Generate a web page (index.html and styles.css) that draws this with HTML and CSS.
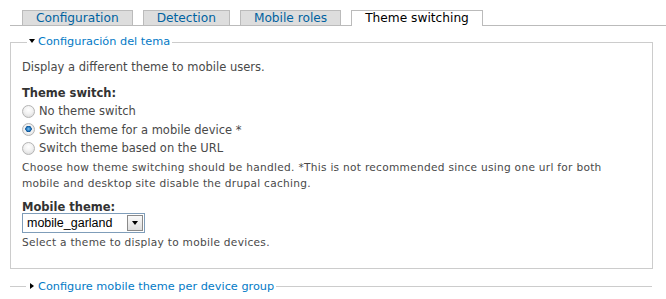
FILE: index.html
```html
<!DOCTYPE html>
<html lang="en">
<head>
  <meta charset="UTF-8">
  <title>Theme switching</title>
  <link rel="stylesheet" href="styles.css">
</head>
<body>

  <ul class="tabs">
    <li><a href="#">Configuration</a></li>
    <li><a href="#">Detection</a></li>
    <li><a href="#">Mobile roles</a></li>
    <li class="active"><a href="#">Theme switching</a></li>
  </ul>

  <form class="settings">
    <fieldset class="group">
      <legend><a href="#"><span class="arrow down"></span>Configuración del tema</a></legend>

      <p class="intro">Display a different theme to mobile users.</p>

      <div class="form-item">
        <label class="title">Theme switch:</label>
        <label class="option"><input type="radio" name="switch" value="none"> No theme switch</label>
        <label class="option"><input type="radio" name="switch" value="device" checked> Switch theme for a mobile device *</label>
        <label class="option"><input type="radio" name="switch" value="url"> Switch theme based on the URL</label>
        <div class="description wrap">Choose how theme switching should be handled. *This is not recommended since using one url for both mobile and desktop site disable the drupal caching.</div>
      </div>

      <div class="form-item">
        <label class="title" for="mobileTheme">Mobile theme:</label>
        <div class="select">
          <select id="mobileTheme">
            <option>mobile_garland</option>
          </select>
          <span class="select-btn"><span class="arrow down"></span></span>
        </div>
        <div class="description">Select a theme to display to mobile devices.</div>
      </div>
    </fieldset>

    <fieldset class="group collapsed">
      <legend><a href="#"><span class="arrow right"></span>Configure mobile theme per device group</a></legend>
    </fieldset>
  </form>

</body>
</html>
```

FILE: styles.css
```css
body {
  font-family: 'DejaVu Sans', Verdana, sans-serif;
  font-size: 11.5px;
  color: #494949;
  background-color: #fff;
  margin: 0;
  padding: 10px 13px 0 10px;
}
a {
  color: #027ac6;
  text-decoration: none;
}
.tabs {
  list-style: none;
  margin: 0 -13px 0 0;
  padding: 0 0 0 12px;
  display: flex;
  gap: 10px;
  border-bottom: 1px solid #bbb;
  height: 15px;
}
.tabs li {
  height: 15px;
  background-color: #ddd;
  border: 1px solid #bbb;
  border-bottom: none;
  box-sizing: border-box;
}
.tabs a {
  display: block;
  padding: 0 13px;
  font-size: 12.2px;
  line-height: 14px;
  color: #0062a0;
}
.tabs li.active {
  background-color: #fff;
  height: 16px;
}
.tabs li.active a {
  color: #000;
}
.settings {
  margin-top: 9px;
}
.group {
  margin: 0;
  padding: 9px 11px 18px;
  border: 1px solid #ccc;
}
.group legend {
  padding: 0 2px;
  margin-left: 5px;
  font-size: 11.3px;
  line-height: 14px;
}
.arrow {
  display: inline-block;
  width: 0;
  height: 0;
  margin-right: 3px;
  vertical-align: 2px;
}
.arrow.down {
  border-left: 3px solid transparent;
  border-right: 3px solid transparent;
  border-top: 4px solid #000;
}
.arrow.right {
  border-top: 3px solid transparent;
  border-bottom: 3px solid transparent;
  border-left: 4px solid #000;
  margin-left: 2px;
  margin-right: 4px;
  vertical-align: 1px;
}
.intro {
  margin: 0 0 8px;
  line-height: 18px;
}
.form-item {
  margin-bottom: 7px;
}
.form-item:last-child {
  margin-bottom: 0;
}
.title {
  display: block;
  font-weight: bold;
  color: #333;
  line-height: 18px;
}
.option {
  display: flex;
  align-items: center;
  gap: 4px;
  line-height: 18.5px;
}
input[type="radio"] {
  appearance: none;
  width: 13px;
  height: 13px;
  margin: 0;
  border: 1px solid #b4b4b4;
  border-radius: 50%;
  background: radial-gradient(circle at 50% 35%, #fff 0%, #f2f2f2 45%, #d4d4d4 100%);
  box-sizing: border-box;
}
input[type="radio"]:checked {
  background: radial-gradient(circle at 50% 45%, #7fc4f2 0%, #1b6fb8 28%, #0a4a88 36%, #f4f4f4 42%, #dcdcdc 100%);
}
.description {
  font-size: 10.6px;
  line-height: 16px;
  letter-spacing: 0.28px;
  margin-top: 1px;
}
.description.wrap {
  width: 590px;
}
.select {
  display: inline-flex;
  height: 20px;
  width: 123px;
  border: 1px solid #7f9db9;
  box-sizing: border-box;
  margin-top: -3px;
}
.select select {
  appearance: none;
  flex: 1;
  border: none;
  outline: none;
  background: #fff;
  font-family: 'Liberation Sans', Arial, sans-serif;
  font-size: 12.5px;
  color: #000;
  padding: 0 0 0 4px;
  margin: 0;
}
.select-btn {
  width: 16px;
  margin: 1px;
  border: 1px solid #8a8a8a;
  box-sizing: border-box;
  background: linear-gradient(#fafafa, #dedede);
  display: flex;
  align-items: center;
  justify-content: center;
}
.select-btn .arrow {
  margin: 0;
  vertical-align: 0;
}
.group.collapsed {
  margin: 11px 1px 0 0;
  border-width: 1px 0 0;
  padding: 0 11px;
}
```
